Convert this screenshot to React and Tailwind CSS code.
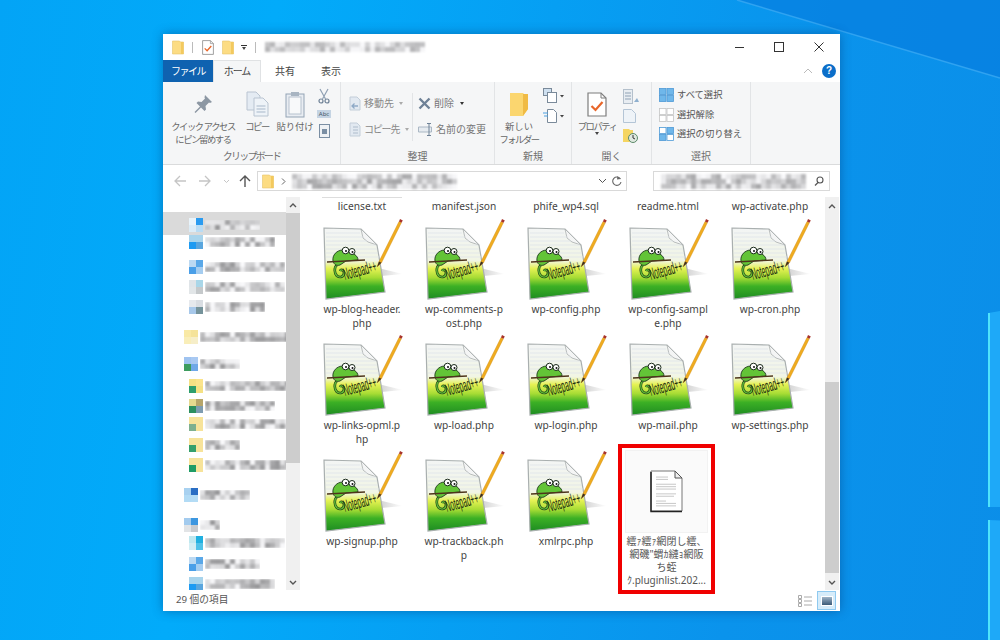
import React from "react";

const jp = "font-['Noto_Sans','Noto_Sans_CJK_JP',sans-serif]";

// deterministic noise so the pixelated strips stay the same on each render
function noise(seed, i) {
  const v = Math.sin(seed * 127.1 + i * 311.7) * 43758.5453;
  return v - Math.floor(v);
}

function Pixelated({ seed = 1, cols = 20, rows = 2, size = 6, dark = 150 }) {
  const cells = [];
  for (let i = 0; i < cols * rows; i++) {
    const n = noise(seed, i);
    const g = Math.round(dark + (250 - dark) * n);
    cells.push(<div key={i} style={{ width: size, height: size, background: `rgb(${g},${g},${g + 2})` }} />);
  }
  return (
    <div className="grid blur-[1px] shrink-0" style={{ gridTemplateColumns: `repeat(${cols}, ${size}px)` }}>
      {cells}
    </div>
  );
}

function FolderSmall() {
  return (
    <svg width="12" height="15" viewBox="0 0 12 15">
      <path d="M0.5 1h7l1 1h3v12h-11z" fill="#fcdc83" stroke="#e6c56a" strokeWidth="0.6" />
      <path d="M9 2h2.5v12h-2.5z" fill="#f3c95e" />
    </svg>
  );
}

function CheckDoc({ w = 12, h = 15 }) {
  return (
    <svg width={w} height={h} viewBox="0 0 20 25">
      <path d="M1 1h13l5 5v18h-18z" fill="#fff" stroke="#7d7d7d" strokeWidth="1.2" />
      <path d="M14 1v5h5" fill="none" stroke="#7d7d7d" strokeWidth="1" />
      <path d="M4.5 14l4 4 7-8" fill="none" stroke="#e8662a" strokeWidth="2.2" />
    </svg>
  );
}

function PinIcon() {
  return (
    <svg width="22" height="22" viewBox="0 0 22 22">
      <path d="M13 2l7 7-2 1-1-.5-3.5 3.5.5 3.5-1.5 1.5-3.5-3.5-5.5 5.5-1-1 5.5-5.5-3.5-3.5 1.5-1.5 3.5.5 3.5-3.5-.5-1z" fill="#8c97a3" />
    </svg>
  );
}

function CopyIcon() {
  return (
    <svg width="23" height="26" viewBox="0 0 23 26">
      <path d="M1 1h9l4 4v14h-13z" fill="#e4ebf3" stroke="#b9c4d1" />
      <path d="M8 7h9l5 5v13h-14z" fill="#eef3f8" stroke="#b9c4d1" />
      <path d="M10.5 15h9M10.5 18h9M10.5 21h9" stroke="#a7b7c9" />
    </svg>
  );
}

function PasteIcon() {
  return (
    <svg width="20" height="27" viewBox="0 0 20 27">
      <rect x="1" y="3" width="18" height="23" fill="#e9edf2" stroke="#93a3b5" />
      <rect x="4" y="6" width="12" height="17" fill="#f8f9fa" stroke="#b7c2ce" />
      <rect x="6" y="1" width="8" height="4" fill="#a9b5c2" />
    </svg>
  );
}

function Scissors() {
  return (
    <svg width="12" height="16" viewBox="0 0 12 16">
      <path d="M2 1l5.5 10M10 1l-5.5 10" stroke="#8fa0b3" strokeWidth="1.2" fill="none" />
      <circle cx="3" cy="13" r="2" fill="none" stroke="#6e8196" strokeWidth="1.2" />
      <circle cx="9" cy="13" r="2" fill="none" stroke="#6e8196" strokeWidth="1.2" />
    </svg>
  );
}

function MoveIcon({ copy }) {
  return (
    <svg width="14" height="15" viewBox="0 0 14 15">
      <path d="M2 1h7l3 3v10h-10z" fill="#e2e9f1" stroke="#c3ced9" />
      {copy ? (
        <path d="M5 5h5M5 8h5M5 11h5" stroke="#aebccb" />
      ) : (
        <path d="M10 10h-6m2.5-2.5l-2.5 2.5 2.5 2.5" stroke="#8ea9c6" fill="none" strokeWidth="1.3" />
      )}
    </svg>
  );
}

function SelectIcon({ mode }) {
  const on = "#6fb7ea";
  const off = "#fff";
  const line = mode === "none" ? "#c4c4c4" : "#4e9ad6";
  const fills = mode === "all" ? [on, on, on, on] : mode === "none" ? [off, off, off, off] : [off, on, on, off];
  const pos = [[0.5, 0.5], [8, 0.5], [0.5, 7.5], [8, 7.5]];
  return (
    <svg width="15" height="14" viewBox="0 0 15 14" className="shrink-0">
      {pos.map(([x, y], i) => (
        <rect key={i} x={x} y={y} width="6.5" height="6" fill={fills[i]} stroke={line} strokeWidth="0.8" />
      ))}
    </svg>
  );
}

// app icon used for every .php file
function NotepadIcon() {
  return (
    <svg width="85" height="85" viewBox="0 0 85 85" className="shrink-0 ml-[3px]">
      <defs>
        <linearGradient id="sheet" x1="0" y1="0" x2="0" y2="1">
          <stop offset="0" stopColor="#f3f5f5" />
          <stop offset="0.46" stopColor="#f1f5e4" />
          <stop offset="0.57" stopColor="#e6f254" />
          <stop offset="0.7" stopColor="#a6dc34" />
          <stop offset="0.82" stopColor="#3cb025" />
          <stop offset="1" stopColor="#1e8c22" />
        </linearGradient>
        <linearGradient id="cast" x1="0" y1="0" x2="1" y2="0">
          <stop offset="0" stopColor="#cfcfcf" />
          <stop offset="1" stopColor="#ffffff" />
        </linearGradient>
      </defs>
      <path d="M57 50l25 6-22 2z" fill="url(#cast)" />
      <path d="M3 10l37 1 16 16 8 47-59 7z" fill="url(#sheet)" stroke="#a9afaf" strokeWidth="1.2" />
      <path d="M40 11l2 9 5 4 9 3z" fill="#f4f5f5" stroke="#a9afaf" strokeWidth="0.8" />
      <path d="M5 15h34M5 19h37M5 23h41M5 27h50M5 31h51M5 35h52M5 39h53" stroke="#dde2ea" strokeWidth="0.7" />
      {/* chameleon on its branch */}
      <path d="M16 47c-3 2-3 8 0 11 3 2 7 1 7-3 0-3-3-4-4-2" fill="none" stroke="#1d3a1b" strokeWidth="2.6" />
      <path d="M16 47c-3 2-3 8 0 11 3 2 7 1 7-3 0-3-3-4-4-2" fill="none" stroke="#63c437" strokeWidth="1.3" />
      <path d="M12 43c-1-6 4-11 10-11l11 4c3 2 4 4 4 6l-12 1-6 4c-3 1-6 0-7-4z" fill="#63c437" stroke="#1d3a1b" strokeWidth="0.9" />
      <path d="M6 44l38-2" stroke="#4e351b" strokeWidth="1.4" />
      <circle cx="24.5" cy="32.5" r="3.3" fill="#fff" stroke="#1c2b1c" strokeWidth="1" />
      <circle cx="31" cy="33.5" r="3" fill="#fff" stroke="#1c2b1c" strokeWidth="1" />
      <circle cx="25" cy="33" r="1" fill="#111" />
      <circle cx="31.5" cy="34" r="1" fill="#111" />
      <text transform="translate(24 62) rotate(-15) scale(0.4 1)" fontFamily="'Liberation Sans'" fontSize="17" fill="#1c2c10">Notepad++</text>
      <path d="M56 49l2-5.5 20-40 2.4 1.200-20 40.300z" fill="#efab1f" stroke="#cf8d14" strokeWidth="0.4" />
      <path d="M56 49l2-5.500 2.400 1.200z" fill="#3a3026" />
      <path d="M78 3.500l1-2.400 2.800 1.300-1.400 2.300z" fill="#a8342c" />
    </svg>
  );
}

function BlankDoc() {
  const rows = [6, 6, 0, 10, 10, 10, 0, 10, 9, 0, 5, 10, 10];
  return (
    <svg width="34" height="43" viewBox="0 0 34 43">
      <path d="M1 1h24l7 7v33h-31z" fill="#fff" stroke="#777" strokeWidth="1" />
      <path d="M25 1v7h7z" fill="#efefef" stroke="#555" />
      <path d="M1 2v39.5h31" fill="none" stroke="#222" strokeWidth="1.5" />
      {rows.map((n, r) =>
        Array.from({ length: n }).map((_, c) => (
          <rect key={`${r}-${c}`} x={6.5 + c * 2} y={6.5 + r * 2.4} width="1" height="1.1" fill="#9a9a9a" />
        ))
      )}
    </svg>
  );
}

function FileCell({ lines }) {
  return (
    <div className="flex flex-col items-center">
      <NotepadIcon />
      <div className="-mt-[1px] text-center text-[10.2px] leading-[14px] text-[#444] whitespace-nowrap">
        {lines.map((l) => (
          <div key={l}>{l}</div>
        ))}
      </div>
    </div>
  );
}

const files = [
  ["wp-blog-header.", "php"],
  ["wp-comments-p", "ost.php"],
  ["wp-config.php"],
  ["wp-config-sampl", "e.php"],
  ["wp-cron.php"],
  ["wp-links-opml.p", "hp"],
  ["wp-load.php"],
  ["wp-login.php"],
  ["wp-mail.php"],
  ["wp-settings.php"],
  ["wp-signup.php"],
  ["wp-trackback.ph", "p"],
  ["xmlrpc.php"],
];

const topRow = ["license.txt", "manifest.json", "phife_wp4.sql", "readme.html", "wp-activate.php"];

// tree rows: top margin, indent, icon colours, pixel strip seed and length
const navRows = [
  { mt: 20, x: 26, c: ["#e9f4fb", "#2a9bf0", "#dcecf7", "#b9dcf4"], s: 2, n: 11, sel: true },
  { mt: 2, x: 26, c: ["#a8d4ec", "#a8d4ec", "#1e9bf2", "#5aa6de"], s: 3, n: 14 },
  { mt: 10, x: 26, c: ["#bcd9f2", "#5aa8e8", "#4a9fe8", "#a5cdf0"], s: 4, n: 16 },
  { mt: 5, x: 26, c: ["#dfe4e8", "#a9d6e8", "#e2e6e8", "#c5c9cb"], s: 5, n: 16 },
  { mt: 5, x: 26, c: ["#e6e9ed", "#d9dde2", "#a7c8ea", "#75939b"], s: 6, n: 12 },
  { mt: 15, x: 21, c: ["#f9e9a5", "#f5e39a", "#f9eeb9", "#f6eec9"], s: 7, n: 19 },
  { mt: 12, x: 21, c: ["#9fc3f0", "#a9c9f2", "#3d9c5e", "#6fa8e8"], s: 8, n: 8 },
  { mt: 7, x: 26, c: ["#f5e184", "#fbe48c", "#2e9e6c", "#f5e184"], s: 9, n: 18 },
  { mt: 5, x: 26, c: ["#e5d98e", "#b6a56a", "#2c8f5f", "#7e9cb0"], s: 10, n: 14 },
  { mt: 3, x: 26, c: ["#f7e39a", "#f7e39a", "#7eb08f", "#f7e39a"], s: 11, n: 19 },
  { mt: 6, x: 26, c: ["#f7e39a", "#f7e39a", "#35a06c", "#f7e39a"], s: 12, n: 7 },
  { mt: 5, x: 26, c: ["#f7e39a", "#f7e39a", "#1f9c66", "#f7e39a"], s: 13, n: 19 },
  { mt: 15, x: 21, c: ["#a8d1f0", "#2a6ec4", "#b2dbf5", "#b4dcf5"], s: 14, n: 10 },
  { mt: 15, x: 21, c: ["#a3cbee", "#3d97e0", "#e2e4e6", "#c9cbce"], s: 15, n: 4 },
  { mt: 3, x: 26, c: ["#bfe8ef", "#20b0e0", "#d2eef4", "#50c2e8"], s: 16, n: 16 },
  { mt: 6, x: 26, c: ["#bcd9f2", "#5aa8e8", "#4a9fe8", "#a5cdf0"], s: 17, n: 11 },
  { mt: 5, x: 26, c: ["#a8d4ec", "#a8d4ec", "#1e9bf2", "#5aa6de"], s: 18, n: 14 },
];

function NavRow({ row }) {
  return (
    <div className="flex items-center h-[15px] shrink-0" style={{ marginTop: row.mt, paddingLeft: row.x }}>
      <div className="grid grid-cols-2 w-[14px] h-[14px] blur-[0.5px] shrink-0">
        {row.c.map((col, i) => (
          <div key={i} style={{ background: col }} />
        ))}
      </div>
      <div className="ml-[2px] overflow-hidden">
        <Pixelated seed={row.s} cols={row.n} rows={2} size={5} dark={150} />
      </div>
    </div>
  );
}

function BigButton({ icon, children, className = "" }) {
  return (
    <div className={`flex flex-col items-center pt-[8px] ${className}`}>
      <div className="h-[28px] flex items-center justify-center">{icon}</div>
      <div className="mt-[2px] text-center text-[9.3px] leading-[13px] text-[#666] whitespace-nowrap">{children}</div>
    </div>
  );
}

function Group({ label, width, children }) {
  return (
    <div className="flex flex-col shrink-0 border-r border-[#e2e4e6]" style={{ width }}>
      <div className="flex-1 flex min-h-0">{children}</div>
      <div className="h-[16px] text-center text-[10px] leading-[16px] text-[#6f6f6f] [&_span]:tracking-[-1.8px]">{label}</div>
    </div>
  );
}

function Caret({ className = "border-t-[#444]" }) {
  return <span className={`inline-block w-0 h-0 border-x-[2.5px] border-x-transparent border-t-[3px] ${className}`} />;
}

export default function App() {
  return (
    <div className={`relative w-[1000px] h-[640px] overflow-hidden bg-[linear-gradient(100deg,#03a4f6_0%,#02abfa_25%,#0a93ec_75%,#0b8ee8_100%)] ${jp}`}>
      {/* wallpaper: thin beam at the top, edge of the logo panes on the right */}
      <svg className="absolute inset-0" width="1000" height="640" viewBox="0 0 1000 640">
        <path d="M737 0h263v78z" fill="#0578dc" opacity="0.55" />
        <path d="M737 0L1000 78" stroke="#3aa9f3" strokeWidth="1.5" opacity="0.8" />
        <path d="M988.5 313L1000 311V507H988.5z" fill="#1ea9f8" />
        <path d="M988.5 520L1000 520.5V640H988.5z" fill="#1ea9f8" />
        <path d="M989 313V507M989 520V640" stroke="#4fe3fb" strokeWidth="2" />
      </svg>

      <div className="absolute left-[163px] top-[34px] w-[677px] h-[577px] bg-white flex flex-col shadow-[0_0_10px_rgba(0,50,110,0.45)]">
        {/* title bar */}
        <div className="h-[26px] flex items-center shrink-0">
          <div className="ml-[9px] flex items-center"><FolderSmall /></div>
          <div className="ml-[8px] w-px h-[11px] bg-[#bbb]" />
          <div className="ml-[9px] flex"><CheckDoc /></div>
          <div className="ml-[8px] flex"><FolderSmall /></div>
          <div className="ml-[7px] flex flex-col items-center gap-[1px]">
            <div className="w-[6px] h-px bg-[#333]" />
            <Caret />
          </div>
          <div className="ml-[8px] w-px h-[11px] bg-[#bbb]" />
          <div className="ml-[9px]"><Pixelated seed={21} cols={32} rows={2} size={5} dark={175} /></div>
          <div className="flex-1" />
          <div className="w-[9px] h-px bg-[#333]" />
          <div className="ml-[30px] w-[10px] h-[10px] border border-[#333]" />
          <svg className="ml-[30px] mr-[16px]" width="10" height="10" viewBox="0 0 10 10">
            <path d="M0.5 0.5l9 9M9.5 0.5l-9 9" stroke="#333" />
          </svg>
        </div>

        {/* ribbon tabs */}
        <div className="h-[22px] flex items-end shrink-0 text-[10px] text-[#444]">
          <div className="w-[50px] h-full bg-[#0f62b0] text-white flex items-center justify-center tracking-[-1.5px]">ファイル</div>
          <div className="w-[48px] h-full bg-[#f5f6f7] border-x border-t border-[#e0e2e4] flex items-center justify-center tracking-[-1px]">ホーム</div>
          <div className="ml-[14px] w-[20px] h-full flex items-center justify-center">共有</div>
          <div className="ml-[26px] w-[20px] h-full flex items-center justify-center">表示</div>
          <div className="flex-1 h-full flex items-center justify-end">
            <svg width="10" height="6" viewBox="0 0 10 6" className="mr-[9px]">
              <path d="M1 5l4-4 4 4" fill="none" stroke="#bbb" />
            </svg>
            <div className="w-[14px] h-[14px] mr-[4px] rounded-full bg-[#0b6ec9] text-white text-[10px] font-bold leading-[14px] text-center font-['Liberation_Sans']">?</div>
          </div>
        </div>

        {/* ribbon */}
        <div className="h-[83px] flex shrink-0 bg-[#f5f6f7] border-b border-[#dadbdc]">
          <Group label={<span>クリップボード</span>} width={178}>
            <BigButton icon={<PinIcon />} className="w-[74px] ml-[3px] tracking-[-1.4px]">クイック アクセス<br />にピン留めする</BigButton>
            <BigButton icon={<CopyIcon />} className="w-[30px] ml-[2px] tracking-[-1.5px]">コピー</BigButton>
            <BigButton icon={<PasteIcon />} className="w-[38px] ml-[4px]">貼り付け</BigButton>
            <div className="flex flex-col items-center ml-[2px] pt-[6px] gap-[6px] w-[16px]">
              <Scissors />
              <div className="w-[14px] h-[8px] bg-[#c5d4e3] text-[6px] leading-[8px] text-center text-[#456]">Abc</div>
              <div className="w-[11px] h-[14px] bg-[#eef1f4] border border-[#7a8ea3] flex items-center justify-center">
                <div className="w-[5px] h-[5px] bg-[#7a8ea3]" />
              </div>
            </div>
          </Group>

          <Group label="整理" width={154}>
            <div className="flex flex-col pl-[7px] pt-[14px] gap-[11px] w-[71px] text-[10px] leading-[15px] text-[#888] whitespace-nowrap">
              <div className="flex items-center gap-[2px]"><MoveIcon /><span>移動先</span><Caret className="ml-[3px] border-t-[#aaa]" /></div>
              <div className="flex items-center gap-[2px]"><MoveIcon copy /><span className="tracking-[-1.2px]">コピー先</span><Caret className="ml-[4px] border-t-[#aaa]" /></div>
            </div>
            <div className="w-px h-[48px] mt-[11px] bg-[#e2e4e6]" />
            <div className="flex flex-col pl-[5px] pt-[14px] gap-[11px] text-[10px] leading-[15px] text-[#777] whitespace-nowrap">
              <div className="flex items-center gap-[3px]">
                <svg width="13" height="13" viewBox="0 0 13 13"><path d="M1.5 1.5l10 10M11.5 1.5l-10 10" stroke="#6f8297" strokeWidth="2.4" /></svg>
                <span>削除</span><Caret className="ml-[3px] border-t-[#333]" />
              </div>
              <div className="flex items-center gap-[3px]">
                <svg width="15" height="13" viewBox="0 0 15 13"><path d="M0.5 4h13v5H0.5z" fill="#e6ebf0" stroke="#aab7c4" /><path d="M11 0.5v12M9 0.5h4M9 12.5h4" stroke="#6f8297" /></svg>
                <span>名前の変更</span>
              </div>
            </div>
          </Group>

          <Group label="新規" width={77}>
            <BigButton className="w-[48px]" icon={
              <svg width="18" height="25" viewBox="0 0 18 25">
                <path d="M0 1h13l1 1h4v15l-5 7H0z" fill="#fbd66f" />
                <path d="M13 2h5v15l-5 7z" fill="#f0bb45" />
              </svg>
            }>新しい<br /><span className="tracking-[-1.5px]">フォルダー</span></BigButton>
            <div className="flex flex-col gap-[5px] pt-[6px]">
              <svg width="21" height="15" viewBox="0 0 21 15">
                <rect x="0.5" y="0.5" width="8" height="7" fill="#cfe0f0" stroke="#7a8a9a" />
                <rect x="4.5" y="4.5" width="9" height="10" fill="#fff" stroke="#7a8a9a" />
                <path d="M17 7h4l-2 2.5z" fill="#444" />
              </svg>
              <svg width="21" height="15" viewBox="0 0 21 15">
                <path d="M4.5 1.5h6l3 3v10h-9z" fill="#fff" stroke="#7a8a9a" />
                <path d="M0 5h5M1 8h4" stroke="#4a9fe0" />
                <path d="M17 7h4l-2 2.5z" fill="#444" />
              </svg>
            </div>
          </Group>

          <Group label="開く" width={80}>
            <BigButton className="w-[50px]" icon={<CheckDoc w={20} h={25} />}>
              <span className="whitespace-nowrap tracking-[-1.5px]">プロパティ</span>
              <div className="flex justify-center -mt-[1px]"><Caret /></div>
            </BigButton>
            <div className="flex flex-col gap-[5px] pt-[7px] ml-[1px]">
              <svg width="17" height="15" viewBox="0 0 17 15">
                <rect x="0.5" y="0.5" width="9" height="14" fill="#e8edf2" stroke="#b4c0cc" />
                <path d="M2 4h6M2 7h6M2 10h6" stroke="#90a2b5" />
                <path d="M11 13l3-4 2 4z" fill="#8fb0cf" />
              </svg>
              <svg width="13" height="14" viewBox="0 0 13 14"><path d="M0.5 0.5h8l4 4v9h-12z" fill="#eef3f8" stroke="#b4c5d6" /></svg>
              <svg width="15" height="15" viewBox="0 0 15 15">
                <path d="M0 1h6l1 1h3v12H0z" fill="#f5d562" />
                <circle cx="10" cy="10" r="4.5" fill="#dfe8e0" stroke="#5c8a6a" />
                <path d="M10 7v3l2 1" stroke="#333" fill="none" />
              </svg>
            </div>
          </Group>

          <Group label="選択" width={99}>
            <div className="flex flex-col pl-[7px] pt-[6px] gap-[5.5px] text-[9.3px] leading-[14px] text-[#555] whitespace-nowrap">
              <div className="flex items-center gap-[3px]"><SelectIcon mode="all" /><span>すべて選択</span></div>
              <div className="flex items-center gap-[3px]"><SelectIcon mode="none" /><span>選択解除</span></div>
              <div className="flex items-center gap-[3px]"><SelectIcon mode="invert" /><span>選択の切り替え</span></div>
            </div>
          </Group>
        </div>

        {/* address bar */}
        <div className="h-[32px] flex items-center shrink-0">
          <svg width="90" height="14" viewBox="0 0 90 14" className="ml-[11px] shrink-0">
            <path d="M1 7h11M6 2L1 7l5 5" fill="none" stroke="#c5c5c5" strokeWidth="1.3" />
            <path d="M25 7h11M31 2l5 5-5 5" fill="none" stroke="#c5c5c5" strokeWidth="1.3" />
            <path d="M50 6l2.5 2.5L55 6" fill="none" stroke="#c5c5c5" />
            <path d="M71 13V2M66 7l5-5 5 5" fill="none" stroke="#555" strokeWidth="1.4" />
          </svg>
          <div className="ml-[-7px] w-[370px] h-[20px] border border-[#d9d9d9] flex items-center shrink-0">
            <div className="ml-[4px] flex"><FolderSmall /></div>
            <svg width="5" height="7" viewBox="0 0 5 7" className="ml-[7px]"><path d="M1 0.5l3 3-3 3" fill="none" stroke="#666" /></svg>
            <div className="ml-[6px]"><Pixelated seed={31} cols={33} rows={3} size={5} dark={165} /></div>
            <div className="flex-1" />
            <svg width="9" height="6" viewBox="0 0 9 6"><path d="M1 1l3.5 3.5L8 1" fill="none" stroke="#555" /></svg>
            <svg width="12" height="12" viewBox="0 0 12 12" className="ml-[4px] mr-[3px]">
              <path d="M9.5 4A4.2 4.2 0 1 0 10 7" fill="none" stroke="#666" strokeWidth="1.1" />
              <path d="M6.5 1l3 3-3.5.5z" fill="#666" />
            </svg>
          </div>
          <div className="ml-[26px] w-[177px] h-[20px] border border-[#d9d9d9] flex items-center shrink-0">
            <div className="ml-[7px]"><Pixelated seed={41} cols={29} rows={3} size={5} dark={165} /></div>
            <div className="flex-1" />
            <svg width="10" height="10" viewBox="0 0 10 10" className="mr-[5px]">
              <circle cx="6" cy="4" r="3" fill="none" stroke="#555" strokeWidth="1.1" />
              <path d="M4 6.5L1 9.5" stroke="#555" strokeWidth="1.3" />
            </svg>
          </div>
        </div>

        {/* panes */}
        <div className="flex flex-1 min-h-0">
          <div className="w-[123px] flex flex-col overflow-hidden shrink-0 relative">
            <div className="absolute left-0 top-[15px] w-full h-[23px] bg-[#dadada]" />
            <div className="relative flex flex-col">
              {navRows.map((r) => (
                <NavRow key={r.s} row={r} />
              ))}
            </div>
          </div>

          <div className="w-[14px] flex flex-col bg-[#f0f0f0] shrink-0">
            <div className="h-[16px] flex items-center justify-center">
              <svg width="8" height="5" viewBox="0 0 8 5"><path d="M1 4l3-3 3 3" fill="none" stroke="#555" strokeWidth="1.4" /></svg>
            </div>
            <div className="h-[250px] bg-[#cdcdcd]" />
            <div className="flex-1" />
            <div className="h-[16px] flex items-center justify-center">
              <svg width="8" height="5" viewBox="0 0 8 5"><path d="M1 1l3 3 3-3" fill="none" stroke="#555" strokeWidth="1.4" /></svg>
            </div>
          </div>

          <div className="flex-1 min-w-0 pl-[11px]">
            <div className="grid grid-cols-[repeat(5,102px)] grid-rows-[21px_116px_116px_116px]">
              {topRow.map((t, i) => (
                <div key={t} className="flex flex-col items-center">
                  <div className={i === 0 ? "w-[80px] h-[2px] border-t border-[#dddddd]" : "h-[2px]"} />
                  <div className="text-[10.2px] leading-[14px] text-[#444]">{t}</div>
                </div>
              ))}
              {files.map((f) => (
                <FileCell key={f[0]} lines={f} />
              ))}
              <div className="relative">
                {/* selected item with its red highlight */}
                <div className="absolute left-[1px] -top-[6px] w-[97px] h-[150px] border-[4px] border-[#f00000] flex flex-col items-center pt-[2px]">
                  <div className="w-[83px] h-[83px] bg-[#fafafa] border border-[#f2f2f2] flex items-center justify-center">
                    <BlankDoc />
                  </div>
                  <div className="mt-[2px] text-center text-[10px] leading-[13px] text-[#555] whitespace-nowrap">
                    <div>繧ｧ繧ｧ網閉し繧、</div>
                    <div>網磯"蝟ｶ縺ｮ網阪</div>
                    <div>ち蛭</div>
                    <div>ｸ.pluginlist.202...</div>
                  </div>
                </div>
              </div>
            </div>
          </div>

          <div className="w-[14px] mr-[1px] flex flex-col bg-[#f0f0f0] shrink-0">
            <div className="h-[18px] flex items-center justify-center">
              <svg width="8" height="5" viewBox="0 0 8 5"><path d="M1 4l3-3 3 3" fill="none" stroke="#555" strokeWidth="1.4" /></svg>
            </div>
            <div className="h-[167px]" />
            <div className="h-[191px] bg-[#cdcdcd]" />
            <div className="flex-1" />
            <div className="h-[16px] flex items-center justify-center">
              <svg width="8" height="5" viewBox="0 0 8 5"><path d="M1 1l3 3 3-3" fill="none" stroke="#555" strokeWidth="1.4" /></svg>
            </div>
          </div>
        </div>

        {/* status bar */}
        <div className="h-[21px] flex items-center shrink-0 text-[9.7px] text-[#555]">
          <span className="ml-[13px]">29 個の項目</span>
          <div className="flex-1" />
          <svg width="14" height="12" viewBox="0 0 14 12" className="mr-[5px]">
            <path d="M0.5 0.5h3v3h-3zM0.5 4.5h3v3h-3zM0.5 8.5h3v3h-3z" fill="none" stroke="#aaa" />
            <path d="M6 2h8M6 6h8M6 10h8" stroke="#aaa" />
          </svg>
          <div className="w-[19px] h-[19px] mr-[4px] bg-[#d6ecfa] border border-[#8fcaf0] flex items-center justify-center">
            <div className="w-[12px] h-[10px] bg-gradient-to-b from-[#9fb4c7] to-[#3b5b78] border border-white" />
          </div>
        </div>
      </div>
    </div>
  );
}
